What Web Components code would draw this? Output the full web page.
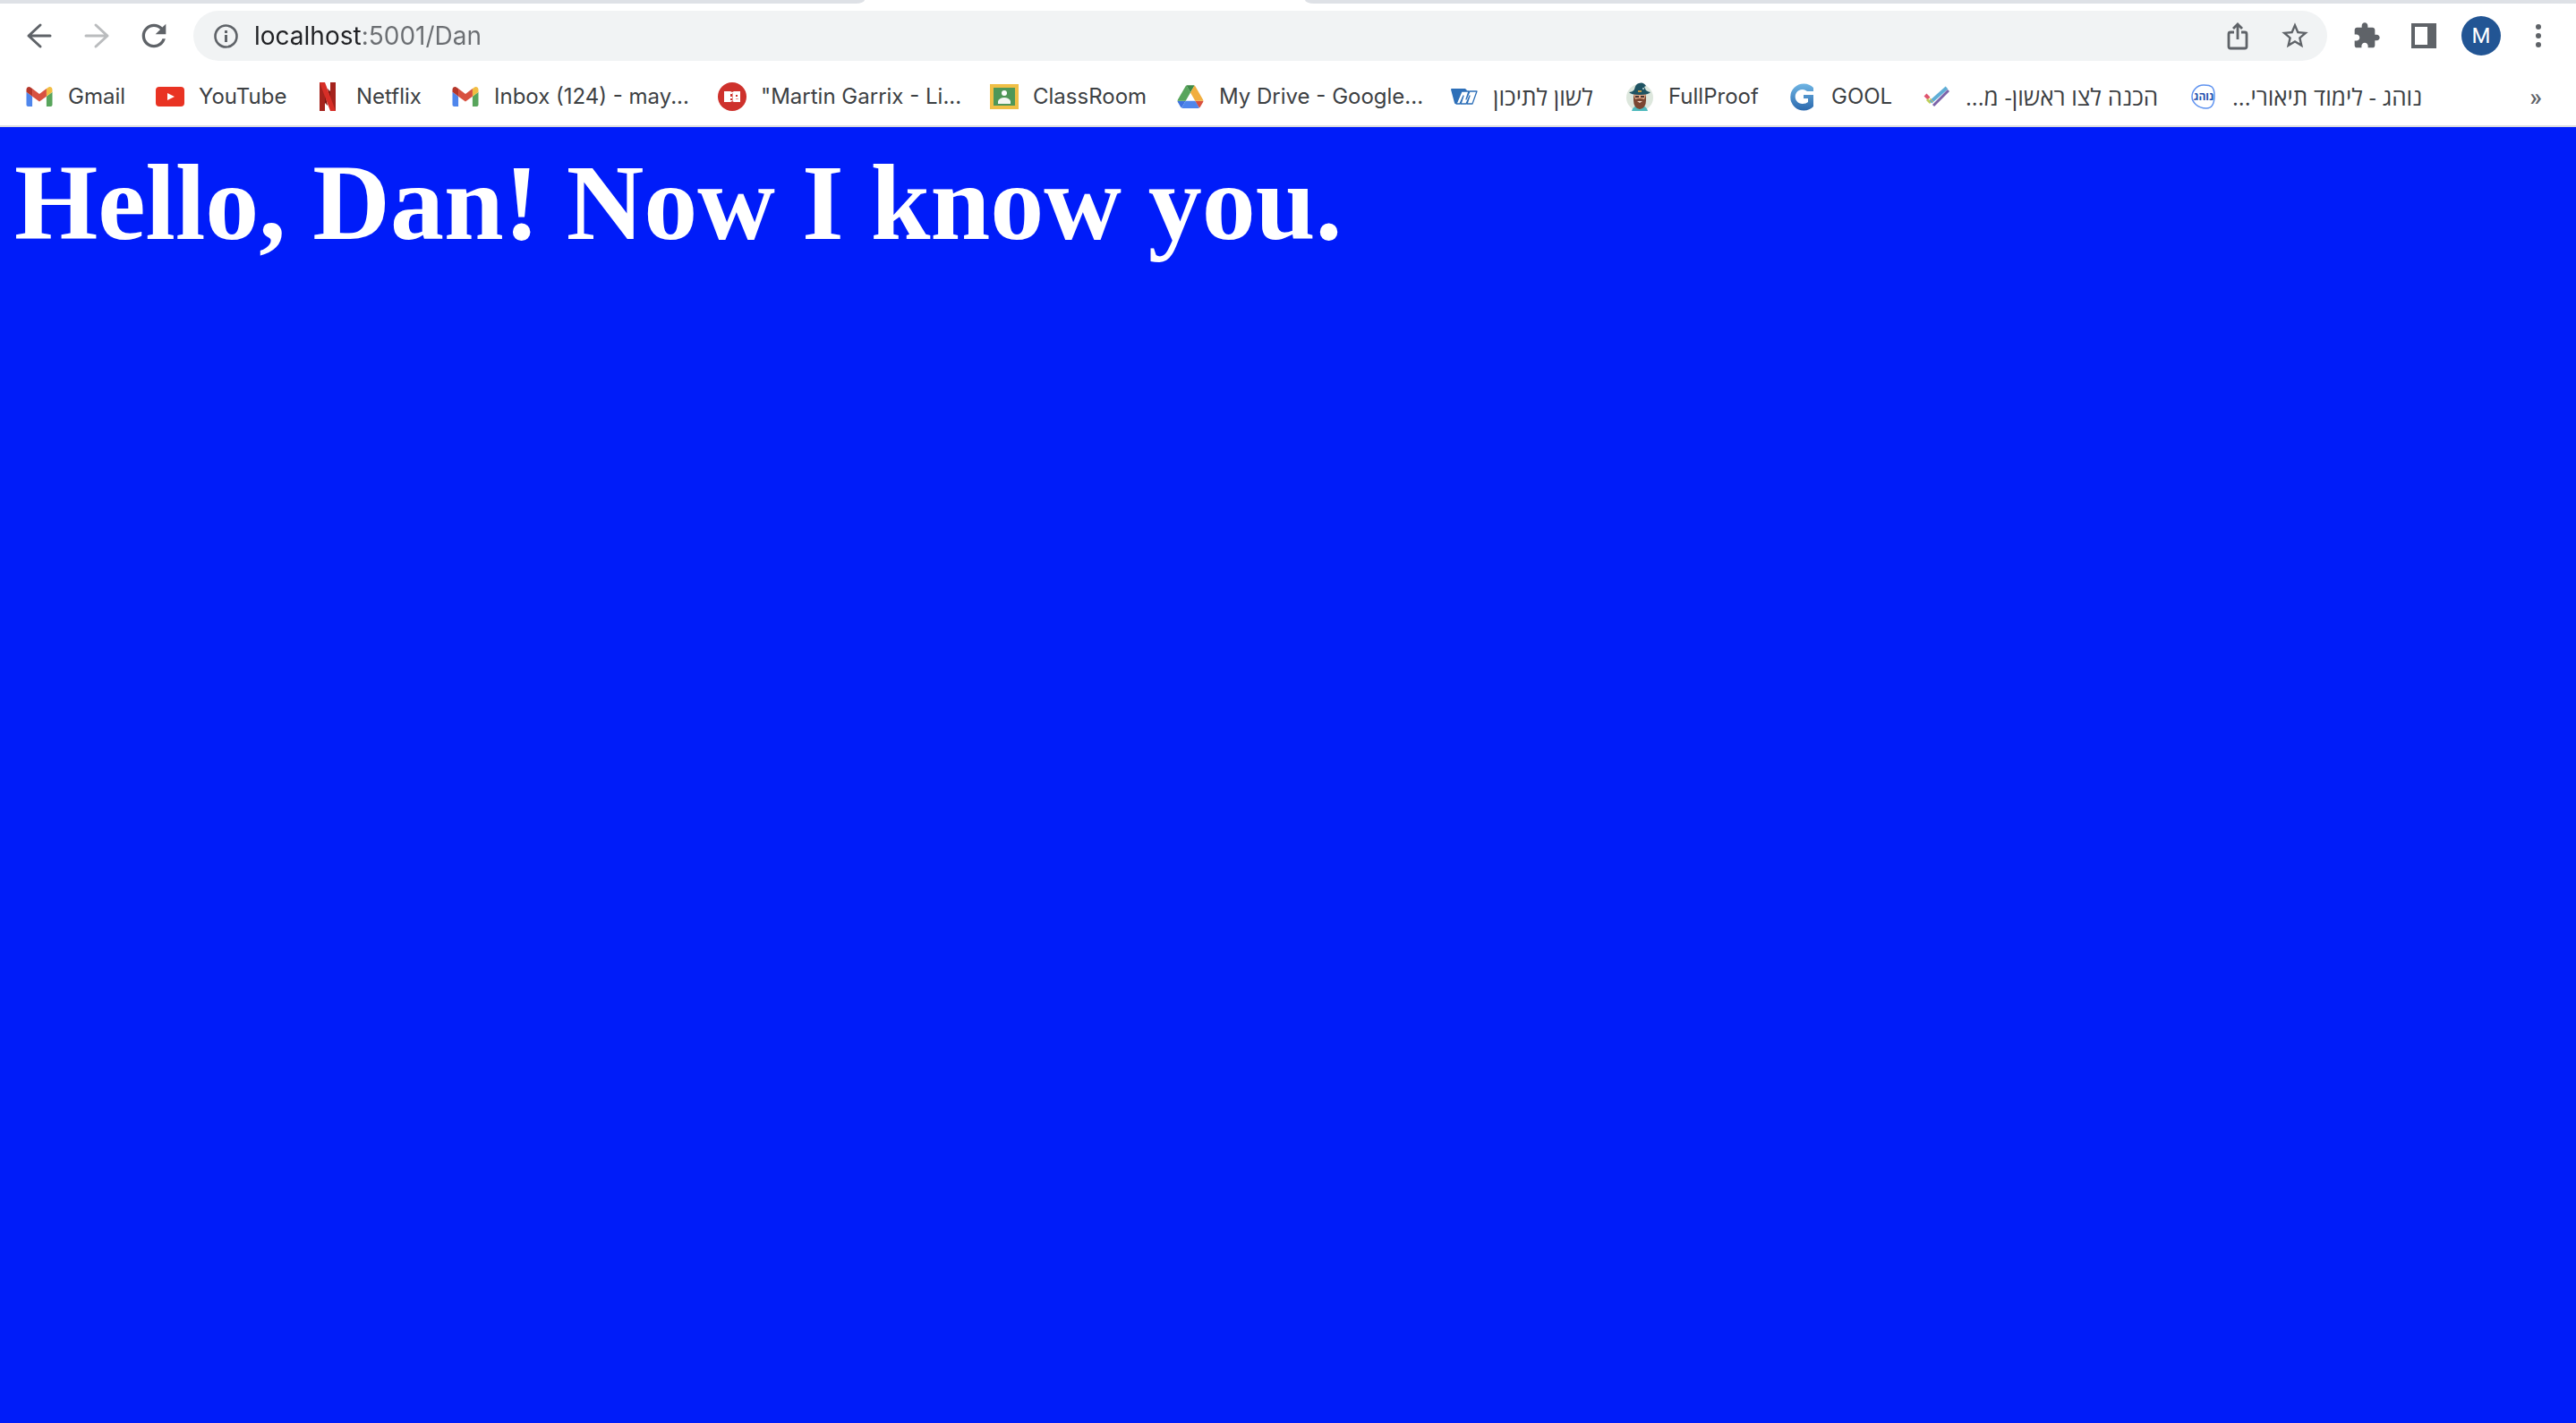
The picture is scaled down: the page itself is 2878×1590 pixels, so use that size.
<!DOCTYPE html>
<html lang="en">
<head>
<meta charset="utf-8">
<title>localhost:5001/Dan</title>
<style>
html, body { margin: 0; height: 100%; }
body { font-family: Inter, "Open Sans", sans-serif; }
</style>
</head>
<body>
<browser-window></browser-window>
<script>
const ICONS = {
  back: ['0 0 40 40', '<path d="M32 20H8M21 8 8 20l13 12" fill="none" stroke="currentColor" stroke-width="3" stroke-linejoin="round" stroke-linecap="round"/>'],
  forward: ['0 0 40 40', '<path d="M8 20h24M19 8l13 12-13 12" fill="none" stroke="currentColor" stroke-width="3" stroke-linejoin="round" stroke-linecap="round"/>'],
  reload: ['0 0 24 24', '<path fill="currentColor" d="M17.65 6.35C16.2 4.9 14.21 4 12 4c-4.42 0-7.99 3.58-7.99 8s3.57 8 7.99 8c3.73 0 6.84-2.55 7.73-6h-2.08c-.82 2.33-3.04 4-5.65 4-3.31 0-6-2.69-6-6s2.69-6 6-6c1.66 0 3.14.69 4.22 1.78L13 11h7V4l-2.35 2.35z"/>'],
  info: ['0 0 40 40', '<circle cx="20.500" cy="20.500" r="12" fill="none" stroke="currentColor" stroke-width="2.600"/><path fill="currentColor" d="M19 14h3v3h-3zM19 19h3v8h-3z"/>'],
  share: ['0 0 40 40', '<path d="M16 16h-4q-2 0-2 2v14q0 2 2 2h16q2 0 2-2V18q0-2-2-2h-4M20 24V8M15 12l5-5 5 5" fill="none" stroke="currentColor" stroke-width="2.800"/>'],
  star: ['0 0 24 24', '<path transform="translate(-.5 -.5) scale(1.040)" fill="currentColor" d="M22 9.240l-7.190-.620L12 2 9.190 8.630 2 9.240l5.460 4.730L5.820 21 12 17.270 18.180 21l-1.630-7.030L22 9.240zM12 15.400l-3.760 2.270 1-4.280-3.320-2.880 4.380-.380L12 6.100l1.710 4.040 4.380.380-3.320 2.880 1 4.280L12 15.400z"/>'],
  puzzle: ['0 0 24 24', '<path fill="currentColor" d="M20.500 11H19V7c0-1.100-.9-2-2-2h-4V3.500C13 2.120 11.880 1 10.500 1S8 2.120 8 3.500V5H4c-1.100 0-1.990.9-1.990 2v3.800H3.500c1.490 0 2.700 1.210 2.700 2.700s-1.210 2.700-2.700 2.700H2V20c0 1.100.9 2 2 2h3.800v-1.500c0-1.490 1.210-2.700 2.700-2.700 1.490 0 2.700 1.210 2.700 2.700V22H17c1.100 0 2-.9 2-2v-4h1.500c1.380 0 2.500-1.120 2.500-2.500S21.880 11 20.500 11z"/>'],
  panel: ['0 0 40 40', '<path fill="currentColor" fill-rule="evenodd" d="M6 6h28v28H6zM10 10v20h14V10z"/>'],
  dots: ['0 0 40 40', '<g fill="currentColor"><circle cx="20" cy="10" r="3"/><circle cx="20" cy="20" r="3"/><circle cx="20" cy="30" r="3"/></g>'],
  gmail: ['47.500 26.500 97 97', '<path fill="#4f86ec" d="M58 108h14V74L52 59v43c0 3.320 2.690 6 6 6"/><path fill="#58a55c" d="M120 108h14c3.320 0 6-2.690 6-6V59l-20 15"/><path fill="#f2bd42" d="M120 48v26l20-15v-8c0-7.420-8.470-11.650-14.400-7.200"/><path fill="#d85140" d="M72 74V48l24 18 24-18v26L96 92"/><path fill="#b5362a" d="M52 51v8l20 15V48l-5.600-4.200c-5.940-4.450-14.400-.220-14.400 7.200"/>'],
  youtube: ['0 0 32 32', '<rect y="5" width="32" height="22" rx="4" fill="#e93323"/><path fill="#fff" d="m13 12 8 4-8 4z"/>'],
  netflix: ['0 0 32 32', '<path fill="#a5231d" d="M7 0h6v32H7zM19 0h6v32h-6z"/><path fill="#7b1813" d="m13 11 3 15-3-3zM19 21l-3-14 3 3z"/><path fill="#d72e27" d="M7 0h6l12 32h-6z"/>'],
  martin: ['0 0 32 32', '<circle cx="16" cy="16" r="16" fill="#ce312c"/><path fill="#fff" d="M7 10h7l2 1 2-1h7v12h-7l-2-1-2 1H7z"/><path fill="#ce312c" d="M14 13h2v3h-2zM14 18h2v2h-2zM20 14h2v2h-2z"/><path fill="#e89a97" d="M16 12h1v9h-1zM20 18h3v1h-3z"/>'],
  classroom: ['0 0 32 32', '<rect y="2" width="32" height="28" fill="#f0bf46"/><rect x="4" y="6" width="24" height="20" fill="#4f9758"/><circle cx="16" cy="12" r="3" fill="#fff"/><path fill="#f3f7f3" d="M9 24v-3q2-4 7-4t7 4v3z"/>'],
  drive: ['-4.700 -9.500 96.800 96.800', '<path fill="#3f73e0" d="m6.600 66.850 3.850 6.650c.8 1.400 1.950 2.500 3.300 3.300L27.500 53H0c0 1.550.4 3.100 1.200 4.500z"/><path fill="#58a55c" d="M43.650 25 29.900 1.200c-1.350.8-2.500 1.900-3.300 3.300L1.200 48.500A9.060 9.060 0 0 0 0 53h27.500z"/><path fill="#d85140" d="M73.550 76.800c1.350-.8 2.500-1.900 3.300-3.300l1.600-2.750L86.100 57.500c.8-1.400 1.200-2.950 1.200-4.500H59.800l5.850 11.500z"/><path fill="#3f8b47" d="M43.650 25 57.400 1.200C56.050.4 54.500 0 52.900 0H34.400c-1.600 0-3.150.45-4.500 1.200z"/><path fill="#4f86ec" d="M59.800 53H27.500L13.750 76.800c1.350.8 2.900 1.200 4.500 1.200h50.800c1.600 0 3.150-.45 4.500-1.200z"/><path fill="#f1ae3f" d="m73.400 26.500-12.700-22c-.8-1.400-1.950-2.500-3.300-3.300L43.650 25 59.800 53h27.450c0-1.550-.4-3.100-1.200-4.500z"/>'],
  lashon: ['0 0 32 32', '<path fill="#2d6fb8" d="M1 8q0-1 1-1h15l2 2-5 15H6q-1 0-1-1z"/><path fill="#fff" stroke="#2d6fb8" stroke-width="1.300" stroke-linejoin="round" d="M7 24l6-14h8l-3 9 4-9h8l-5 14h-6l3-9-4 9h-6l3-9-4 9z"/>'],
  wizard: ['0 0 32 32', '<circle cx="16" cy="17" r="15" fill="#dde7dd"/><path fill="#4fb9bd" d="M7 32q1-6 9-6t9 6z"/><path fill="#d9a383" d="M9 13h14v8H9z"/><path fill="#4c3530" d="M11 15h4v2h-4zM17 15h4v2h-4z"/><path fill="#7a4632" d="M9 14v6q0 9 7 10 7-1 7-10v-6l-2 5q-5-2-10 0z"/><path fill="#f1d9cc" d="M13 21h6l-3 2z"/><path fill="#1f5362" d="M4 11q4 0 6-3 1-6 5-7 5-2 8 3l-2 1 2 4q3 2 5 2-2 3-12 3T4 11z"/><path fill="#c69a45" d="M14 9h4v2h-4z"/><path fill="#9ab9be" d="M19 6h2v2h-2z"/>'],
  gool: ['0 0 32 32', '<defs><linearGradient id="g" x2="0" y2="1"><stop stop-color="#6fb5e4"/><stop offset="1" stop-color="#2b69ad"/></linearGradient></defs><path fill="url(#g)" d="M28 6A15 15 0 1 0 28 27V14H17v4h5v4q-2 2-6 2a8 8 0 1 1 5-14h7z"/>'],
  check: ['0 0 32 32', '<path d="m3 14 4 4" stroke="#df5570" stroke-width="4"/><path d="m5 19 3 3 3-3" stroke="#c1cf59" stroke-width="3" fill="none"/><path d="M9 22 27 6" stroke="#5faed6" stroke-width="4"/><path d="M12 26 29 9" stroke="#7c63a8" stroke-width="3"/><path d="m7 17 5 5" stroke="#e8b64c" stroke-width="1"/>'],
  noheg: ['0 0 32 32', '<path d="M16 3c9 0 12 2 12 12 0 11-4 14-9 14C9 29 3 22 3 16S8 3 16 3z" fill="#fff" stroke="#5f93f0" stroke-width="1.500"/><text x="16" y="20" text-anchor="middle" font-family="Open Sans" font-size="12" font-weight="700" fill="#244fae">נוהג</text>']
};

function define(name, html, setup) {
  const template = document.createElement('template');
  template.innerHTML = html;
  customElements.define(name, class extends HTMLElement {
    connectedCallback() {
      if (this.shadowRoot) return;
      this.attachShadow({ mode: 'open' }).append(template.content.cloneNode(true));
      if (setup) setup(this, this.shadowRoot);
    }
  });
}

define('ui-icon', `<style>
:host { display: block; flex: none; width: var(--icon-size, 40px); height: var(--icon-size, 40px); }
svg { display: block; width: 100%; height: 100%; }
</style><svg aria-hidden="true"></svg>`, (host, root) => {
  const [box, art] = ICONS[host.getAttribute('name')];
  const svg = root.querySelector('svg');
  svg.setAttribute('viewBox', box);
  svg.innerHTML = art;
});

define('tool-button', `<style>
:host { display: block; flex: none; color: #5f6368; }
:host([muted]) { color: #babcbe; }
button { display: flex; align-items: center; justify-content: center; width: 56px; height: 56px;
  padding: 0; border: 0; border-radius: 50%; background: none; color: inherit; font: 500 28px Roboto, sans-serif; }
</style><button type="button"><slot></slot></button>`, (host, root) => {
  root.querySelector('button').setAttribute('aria-label', host.getAttribute('label'));
});

define('tab-strip', `<style>
:host { display: grid; grid-template-columns: 966fr 492fr 1420fr; height: 4px; background: #fff; }
div { background: #dee1e6; }
.before { border-bottom-right-radius: 10px 4px; }
.after { grid-column: 3; border-bottom-left-radius: 10px 4px; }
</style><div class="before"></div><div class="after"></div>`);

define('address-bar', `<style>
:host { display: flex; align-items: center; flex: 1; gap: 8px; height: 56px; margin: 0 8px;
  padding: 0 8px 0 16px; box-sizing: border-box; border-radius: 28px; background: #f1f3f4; color: #5f6368; }
input { flex: 1; min-width: 0; height: 40px; margin-left: 4px; padding: 0; border: 0; outline: 0;
  font: 28px Inter, sans-serif; color: #6b6e72;
  background: linear-gradient(90deg, #202124 122px, #6b6e72 122px);
  -webkit-background-clip: text; background-clip: text; -webkit-text-fill-color: transparent; }
</style>
<ui-icon name="info"></ui-icon>
<input type="text" aria-label="Address" value="localhost:5001/Dan" spellcheck="false">
<tool-button label="Share"><ui-icon name="share"></ui-icon></tool-button>
<tool-button label="Bookmark"><ui-icon name="star" style="--icon-size: 34px"></ui-icon></tool-button>`);

define('nav-toolbar', `<style>
:host { display: flex; align-items: center; gap: 8px; height: 72px; padding: 0 14px 0 16px; }
.avatar { display: block; width: 44px; height: 44px; border-radius: 50%; text-align: center;
  background: #225594; color: #fff; font-size: 24px; font-weight: 400; line-height: 44px; }
</style>
<tool-button label="Back"><ui-icon name="back"></ui-icon></tool-button>
<tool-button label="Forward" muted><ui-icon name="forward"></ui-icon></tool-button>
<tool-button label="Reload"><ui-icon name="reload"></ui-icon></tool-button>
<address-bar></address-bar>
<tool-button label="Extensions"><ui-icon name="puzzle" style="--icon-size: 32px"></ui-icon></tool-button>
<tool-button label="Side panel"><ui-icon name="panel"></ui-icon></tool-button>
<tool-button label="Profile"><span class="avatar">M</span></tool-button>
<tool-button label="Menu"><ui-icon name="dots"></ui-icon></tool-button>`);

define('bookmark-link', `<style>
:host { display: block; --icon-size: 32px; }
a { display: flex; align-items: center; gap: 16px; color: #3c4043; text-decoration: none;
  font-size: 24px; line-height: 32px; white-space: nowrap; }
:host([lang="he"]) a { font-family: "Open Sans", sans-serif; font-size: 26px; }
</style><a href="#"><span class="icon"></span><span><slot></slot></span></a>`, (host, root) => {
  const icon = document.createElement('ui-icon');
  icon.setAttribute('name', host.getAttribute('icon'));
  root.querySelector('.icon').replaceWith(icon);
});

define('bookmarks-bar', `<style>
:host { display: flex; align-items: center; justify-content: space-between; height: 64px;
  padding: 0 17px 0 28px; border-bottom: 2px solid #dadce0; }
nav { display: grid; grid-template-columns: 146px 176px 154px 298px 304px 208px 306px 196px 182px 150px 298px auto; }
</style>
<nav aria-label="Bookmarks">
<bookmark-link icon="gmail">Gmail</bookmark-link>
<bookmark-link icon="youtube">YouTube</bookmark-link>
<bookmark-link icon="netflix">Netflix</bookmark-link>
<bookmark-link icon="gmail">Inbox (124) - may...</bookmark-link>
<bookmark-link icon="martin">"Martin Garrix - Li...</bookmark-link>
<bookmark-link icon="classroom">ClassRoom</bookmark-link>
<bookmark-link icon="drive">My Drive - Google...</bookmark-link>
<bookmark-link icon="lashon" lang="he"><bdi dir="rtl">לשון לתיכון</bdi></bookmark-link>
<bookmark-link icon="wizard">FullProof</bookmark-link>
<bookmark-link icon="gool">GOOL</bookmark-link>
<bookmark-link icon="check" lang="he"><bdi dir="rtl">הכנה לצו ראשון- מ...</bdi></bookmark-link>
<bookmark-link icon="noheg" lang="he"><bdi dir="rtl">נוהג - לימוד תיאורי...</bdi></bookmark-link>
</nav>
<tool-button label="More bookmarks">»</tool-button>`);

define('greeting-page', `<style>
:host { display: block; flex: 1; padding: 16px; background: #001cf9; color: #fff; }
h1 { margin: 0; font: bold 120px "Liberation Serif", serif; }
</style><h1><slot></slot></h1>`);

define('browser-window', `<style>
:host { display: flex; flex-direction: column; min-height: 100vh; background: #fff; }
</style>
<tab-strip></tab-strip>
<nav-toolbar></nav-toolbar>
<bookmarks-bar></bookmarks-bar>
<greeting-page>Hello, Dan! Now I know you.</greeting-page>`);
</script>
</body>
</html>
